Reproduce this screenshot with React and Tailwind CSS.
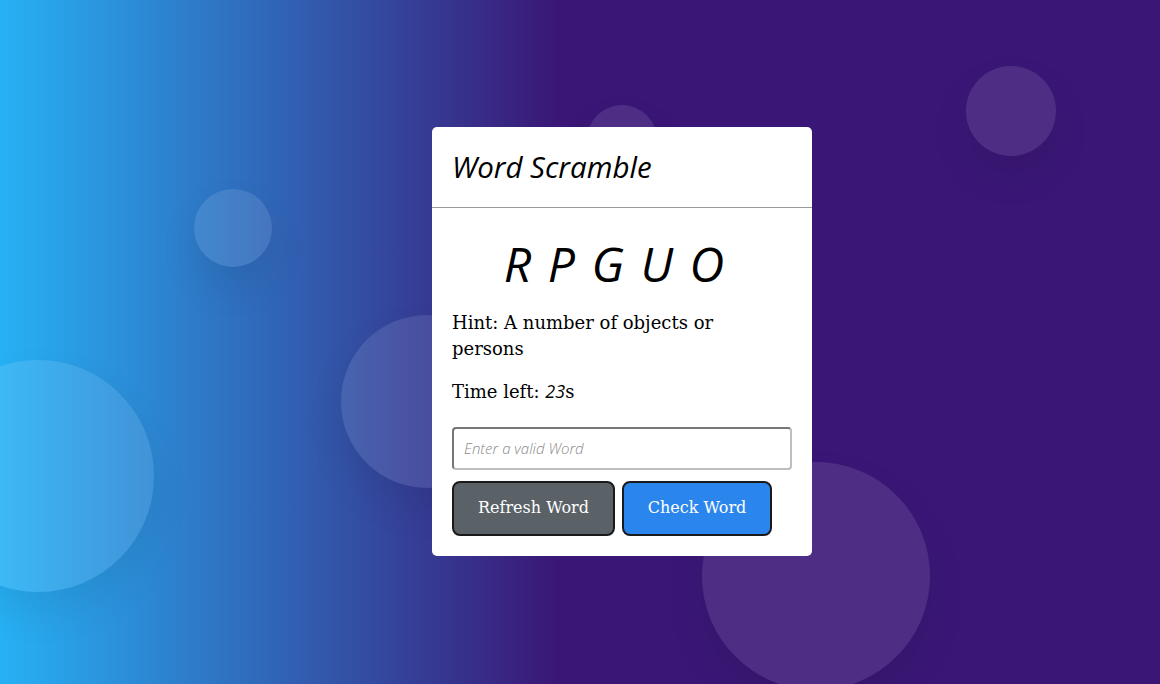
import { useState } from 'react';

const bubbles = [
  { id: 1, className: 'left-[194px] top-[189px] h-[78px] w-[78px]' },
  { id: 2, className: 'left-[-78px] top-[360px] h-[232px] w-[232px]' },
  { id: 3, className: 'left-[341px] top-[315px] h-[173px] w-[173px]' },
  { id: 4, className: 'left-[587px] top-[105px] h-[70px] w-[70px]' },
  { id: 5, className: 'left-[966px] top-[66px] h-[90px] w-[90px]' },
  { id: 6, className: 'left-[702px] top-[462px] h-[228px] w-[228px]' },
];

export default function App() {
  const [guess, setGuess] = useState('');

  return (
    <div className="relative flex h-screen w-full items-center justify-center overflow-hidden bg-[linear-gradient(to_right,#27b1f5_0%,#3a1776_48%,#3a1776_100%)] pb-[2px] pl-[84px]">
      {bubbles.map((b) => (
        <span
          key={b.id}
          className={`absolute rounded-full bg-white/10 shadow-[0_20px_40px_rgba(0,0,0,0.08)] ${b.className}`}
        />
      ))}

      <div className="relative z-10 w-[380px] rounded-[5px] bg-white">
        <div className="border-b border-[#9a9a9a] px-5 py-5">
          <h1 className="font-['Open_Sans',sans-serif] text-[29.5px] italic leading-[40px] text-black">
            Word Scramble
          </h1>
        </div>

        <div className="px-5 pb-5 pt-[25px]">
          <p className="pr-[14px] text-center font-['Open_Sans',sans-serif] text-[48px] italic leading-[62px] tracking-[2px] text-black">
            R P G U O
          </p>

          <p className="mt-[15px] max-w-[320px] font-['DejaVu_Serif',serif] text-[18px] leading-[26px] text-black">
            Hint: A number of objects or persons
          </p>

          <p className="mt-[16px] font-['DejaVu_Serif',serif] text-[18px] leading-[26px] text-black">
            Time left:{' '}
            <span className="font-['Open_Sans',sans-serif] italic">23</span>s
          </p>

          <input
            value={guess}
            onChange={(e) => setGuess(e.target.value)}
            placeholder="Enter a valid Word"
            className="mt-[22px] h-[43px] w-full rounded-[4px] border-2 border-t-[#767676] border-l-[#767676] border-r-[#bdbdbd] border-b-[#bdbdbd] px-[10px] font-['Open_Sans',sans-serif] text-[15px] font-light italic text-black outline-none placeholder:text-[#8a8a8a]"
          />

          <div className="mt-[11px] flex gap-[7px]">
            <button className="h-[55px] w-[163px] rounded-[8px] border-2 border-[#1a1a1a] bg-[#5a6268] font-['DejaVu_Serif',serif] text-[16px] text-white">
              Refresh Word
            </button>
            <button className="h-[55px] w-[150px] rounded-[8px] border-2 border-[#1a1a1a] bg-[#2a86ec] font-['DejaVu_Serif',serif] text-[16px] text-white">
              Check Word
            </button>
          </div>
        </div>
      </div>
    </div>
  );
}
